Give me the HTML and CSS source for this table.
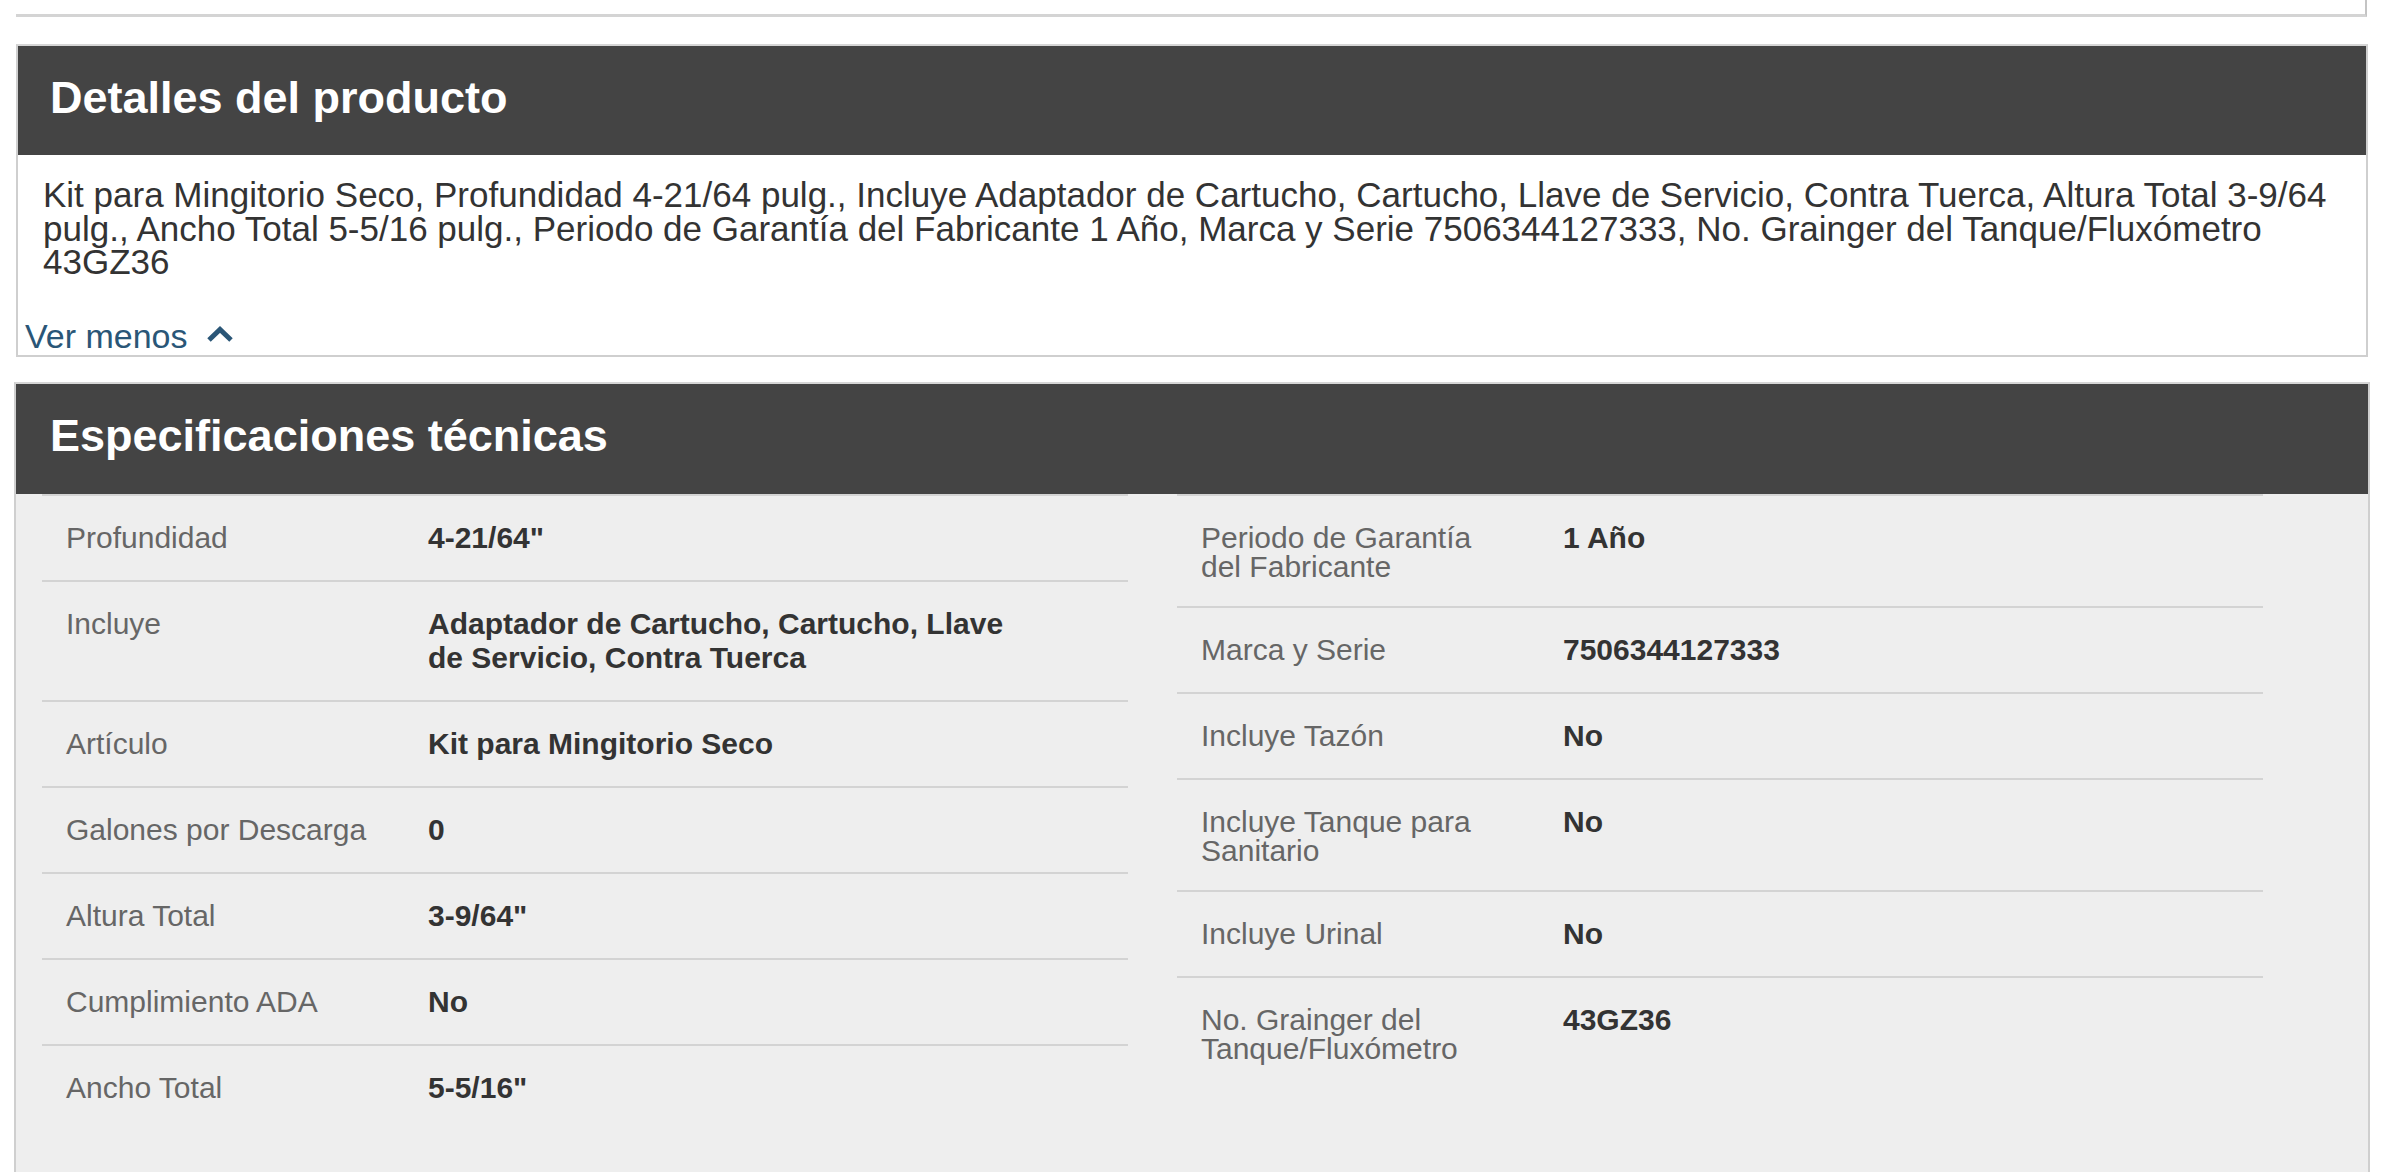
FILE: index.html
```html
<!DOCTYPE html>
<html lang="es">
<head>
<meta charset="utf-8">
<title>Detalles del producto</title>
<link rel="stylesheet" href="styles.css">
</head>
<body>
<div class="prev-end"></div>

<section class="details">
  <h2 class="section-title">Detalles del producto</h2>
  <p class="description">Kit para Mingitorio Seco, Profundidad 4-21/64 pulg., Incluye Adaptador de Cartucho, Cartucho, Llave de Servicio, Contra Tuerca, Altura Total 3-9/64 pulg., Ancho Total 5-5/16 pulg., Periodo de Garantía del Fabricante 1 Año, Marca y Serie 7506344127333, No. Grainger del Tanque/Fluxómetro 43GZ36</p>
  <a class="toggle" href="#">Ver menos
    <svg class="chevron" width="28" height="16" viewBox="0 0 28 16" aria-hidden="true"><polyline points="3,14 14,3.5 25,14" fill="none" stroke="currentColor" stroke-width="5" stroke-linecap="butt" stroke-linejoin="miter"/></svg>
  </a>
</section>

<section class="specs">
  <h2 class="section-title specs-title">Especificaciones técnicas</h2>
  <div class="specs-body">
    <dl class="spec-col">
      <div class="spec-row"><dt>Profundidad</dt><dd>4-21/64"</dd></div>
      <div class="spec-row"><dt>Incluye</dt><dd>Adaptador de Cartucho, Cartucho, Llave de Servicio, Contra Tuerca</dd></div>
      <div class="spec-row"><dt>Artículo</dt><dd>Kit para Mingitorio Seco</dd></div>
      <div class="spec-row"><dt>Galones por Descarga</dt><dd>0</dd></div>
      <div class="spec-row"><dt>Altura Total</dt><dd>3-9/64"</dd></div>
      <div class="spec-row"><dt>Cumplimiento ADA</dt><dd>No</dd></div>
      <div class="spec-row"><dt>Ancho Total</dt><dd>5-5/16"</dd></div>
    </dl>
    <dl class="spec-col">
      <div class="spec-row"><dt>Periodo de Garantía del Fabricante</dt><dd>1 Año</dd></div>
      <div class="spec-row"><dt>Marca y Serie</dt><dd>7506344127333</dd></div>
      <div class="spec-row"><dt>Incluye Tazón</dt><dd>No</dd></div>
      <div class="spec-row"><dt>Incluye Tanque para Sanitario</dt><dd>No</dd></div>
      <div class="spec-row"><dt>Incluye Urinal</dt><dd>No</dd></div>
      <div class="spec-row"><dt>No. Grainger del Tanque/Fluxómetro</dt><dd>43GZ36</dd></div>
    </dl>
  </div>
</section>
</body>
</html>
```

FILE: styles.css
```css
* {
  box-sizing: border-box;
}

html, body {
  margin: 0;
  padding: 0;
  background: #ffffff;
}

body {
  font-family: "Liberation Sans", Arial, Helvetica, sans-serif;
  color: #333333;
}

.prev-end {
  margin-left: 16px;
  width: 2351px;
  height: 17px;
  border-right: 2px solid #c4c4c4;
  border-bottom: 3px solid #d4d4d4;
}

.details {
  margin: 27px 0 0 16px;
  width: 2352px;
  border: 2px solid #cfcfcf;
  border-top-color: #d6d6d6;
}

.section-title {
  margin: 0;
  background: #444444;
  color: #ffffff;
  font-size: 45px;
  font-weight: bold;
  line-height: 52px;
  padding: 26px 0 31px 32px;
}

.description {
  margin: 0;
  padding: 23px 20px 0 25px;
  font-size: 35px;
  line-height: 33.7px;
  color: #333333;
}

.toggle {
  display: flex;
  align-items: center;
  margin-top: 40px;
  padding: 0 0 2px 7px;
  font-size: 34px;
  line-height: 34px;
  color: #2a5677;
  text-decoration: none;
}

.chevron {
  margin-left: 18px;
  margin-bottom: 4px;
  color: #2a5677;
}

.specs {
  margin: 25px 0 0 14px;
  width: 2356px;
  border: 2px solid #cfcfcf;
  border-top-color: #d6d6d6;
  border-bottom: none;
}

.specs-title {
  padding: 26px 0 32px 34px;
}

.specs-body {
  background: #eeeeee;
  display: flex;
  gap: 49px;
  padding: 0 0 80px 26px;
}

.spec-col {
  margin: 0;
  width: 1086px;
}

.spec-row {
  display: grid;
  grid-template-columns: 312px 600px;
  column-gap: 50px;
  align-items: baseline;
  border-top: 2px solid #d3d3d3;
  padding: 25px 0 25px 24px;
}

.spec-row dt {
  margin: 0;
  font-size: 30px;
  line-height: 29px;
  color: #666666;
}

.spec-row dd {
  margin: 0;
  font-size: 30px;
  line-height: 34px;
  font-weight: bold;
  color: #333333;
}
```
